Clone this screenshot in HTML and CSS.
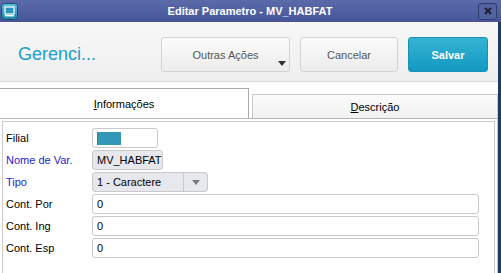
FILE: index.html
```html
<!DOCTYPE html>
<html lang="pt">
<head>
  <meta charset="UTF-8">
  <title>Editar Parametro - MV_HABFAT</title>
  <link rel="stylesheet" href="styles.css">
</head>
<body>
  <div class="titlebar">
    <svg class="app-icon" width="17" height="17" viewBox="0 0 17 17">
      <defs>
        <linearGradient id="ig" x1="0" y1="0" x2="0" y2="1">
          <stop offset="0" stop-color="#5cc3dc"/>
          <stop offset="1" stop-color="#1d86a6"/>
        </linearGradient>
      </defs>
      <rect x="0.5" y="0.5" width="16" height="16" rx="3" fill="url(#ig)" stroke="#1f4f6a"/>
      <rect x="4" y="4" width="9" height="7" fill="#2a95b5" stroke="#fff" stroke-width="1.2"/>
      <rect x="4" y="12" width="9" height="1.4" fill="#fff"/>
    </svg>
    <span class="title">Editar Parametro - MV_HABFAT</span>
    <span class="close">
      <svg width="8" height="8" viewBox="0 0 8 8"><path d="M1 1L7 7M7 1L1 7" stroke="#1e1e2e" stroke-width="2"/></svg>
    </span>
  </div>

  <div class="main">
    <div class="header">
      <span class="brand">Gerenci...</span>
      <button class="btn btn-more">Outras Ações<span class="caret"></span></button>
      <button class="btn btn-cancel">Cancelar</button>
      <button class="btn btn-save">Salvar</button>
    </div>

    <div class="tabs">
      <div class="tab active"><u>I</u>nformações</div>
      <div class="tab"><u>D</u>escrição</div>
    </div>

    <div class="panel">
      <div class="form">
        <label>Filial</label>
        <div class="field filial"><span class="swatch"></span></div>

        <label class="req">Nome de Var.</label>
        <div class="field ro var">MV_HABFAT</div>

        <label class="req">Tipo</label>
        <div class="field ro select"><span class="sel-text">1 - Caractere</span><span class="sel-btn"></span></div>

        <label>Cont. Por</label>
        <div class="field">0</div>

        <label>Cont. Ing</label>
        <div class="field">0</div>

        <label>Cont. Esp</label>
        <div class="field">0</div>
      </div>
    </div>
  </div>
</body>
</html>
```

FILE: styles.css
```css
body {
  margin: 0;
  width: 501px;
  height: 273px;
  overflow: hidden;
  background: #fff;
  font-family: "Liberation Sans", Arial, sans-serif;
  font-size: 11px;
  color: #000;
}
.titlebar {
  height: 22px;
  display: flex;
  align-items: center;
  padding: 0 4px 0 1px;
  background: linear-gradient(#5b6aa8, #46559a);
}
.app-icon {
  display: block;
}
.title {
  flex: 1;
  text-align: center;
  color: #fff;
  font-weight: bold;
  font-size: 11px;
  padding-left: 4px;
}
.close {
  width: 17px;
  height: 15px;
  border: 1px solid #2f3c72;
  border-radius: 3px;
  background: #5363a2;
  display: flex;
  align-items: center;
  justify-content: center;
}
.main {
  border-right: 3px solid #1c3a6a;
  height: 251px;
}
.header {
  height: 60px;
  display: flex;
  align-items: flex-start;
  gap: 10px;
  padding: 15px 10px 0 18px;
  box-sizing: border-box;
  background: linear-gradient(#f7f7f7, #efefef);
  border-bottom: 1px solid #dadada;
}
.brand {
  flex: 1;
  color: #1d9ecb;
  font-size: 18px;
  line-height: 35px;
}
.btn {
  height: 35px;
  border: 1px solid #d3d3d3;
  border-radius: 3px;
  background: linear-gradient(#fbfbfb, #ececec);
  color: #555;
  font-family: "Liberation Sans", Arial, sans-serif;
  font-size: 11px;
  padding: 0;
  position: relative;
}
.btn-more {
  width: 129px;
}
.btn-cancel {
  width: 98px;
}
.btn-save {
  width: 80px;
  color: #fff;
  font-weight: bold;
  border-color: #1a91b6;
  background: linear-gradient(#35b3d3, #1299c2);
}
.caret {
  position: absolute;
  right: 3px;
  bottom: 5px;
  border-left: 4px solid transparent;
  border-right: 4px solid transparent;
  border-top: 5px solid #333;
}
.tabs {
  display: flex;
  height: 36px;
  align-items: flex-end;
  gap: 3px;
}
.tab {
  box-sizing: border-box;
  display: flex;
  align-items: center;
  justify-content: center;
}
.tab.active {
  width: 249px;
  height: 30px;
  border-top: 1px solid #a9a9a9;
  border-right: 1px solid #a9a9a9;
  background: #fff;
}
.tab:not(.active) {
  width: 246px;
  height: 24px;
  border: 1px solid #c9c9c9;
  border-bottom: none;
  background: linear-gradient(#fbfbfb, #f1f1f1);
}
.panel {
  border-top: 1px solid #b5b5b5;
  border-right: 1px solid #c6c6c6;
  padding: 2px 2px 0 2px;
  height: 155px;
  box-sizing: border-box;
}
.form {
  height: 100%;
  border: 1px solid #cbcbcb;
  border-bottom: none;
  box-sizing: border-box;
  display: grid;
  grid-template-columns: 86px 1fr;
  grid-auto-rows: 20px;
  row-gap: 2px;
  align-content: start;
  align-items: center;
  padding: 6px 15px 0 3px;
}
.req {
  color: #2424d4;
}
.field {
  height: 20px;
  box-sizing: border-box;
  border: 1px solid #c9c9c9;
  border-radius: 3px;
  background: #fff;
  padding-left: 4px;
  display: flex;
  align-items: center;
}
.ro {
  background: #e6e8ee;
}
.filial {
  width: 66px;
}
.swatch {
  width: 24px;
  height: 13px;
  background: #3398b8;
  border-left: 1px solid #a2504a;
  box-sizing: border-box;
}
.var {
  width: 71px;
}
.select {
  width: 116px;
  padding-right: 0;
}
.sel-text {
  flex: 1;
}
.sel-btn {
  width: 23px;
  height: 100%;
  border-left: 1px solid #c9c9c9;
  display: flex;
  align-items: center;
  justify-content: center;
}
.sel-btn::after {
  content: "";
  border-left: 4px solid transparent;
  border-right: 4px solid transparent;
  border-top: 5px solid #7a7a7a;
}
```
